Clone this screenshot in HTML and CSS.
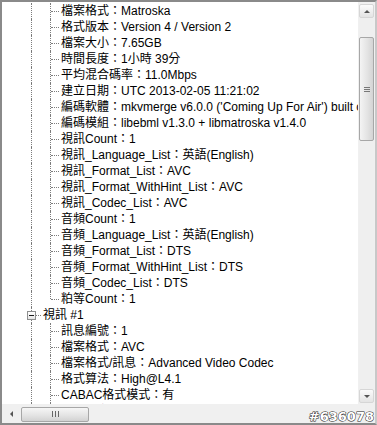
FILE: index.html
```html
<!DOCTYPE html>
<html>
<head>
<meta charset="utf-8">
<link rel="stylesheet" href="styles.css">
</head>
<body>
<div class="window">
  <div class="view">
    <div class="tree">
      <div class="row"><span class="cell v"></span><span class="cell t"></span><span class="txt">檔案格式：Matroska</span></div>
      <div class="row"><span class="cell v"></span><span class="cell t"></span><span class="txt">格式版本：Version 4 / Version 2</span></div>
      <div class="row"><span class="cell v"></span><span class="cell t"></span><span class="txt">檔案大小：7.65GB</span></div>
      <div class="row"><span class="cell v"></span><span class="cell t"></span><span class="txt">時間長度：1小時 39分</span></div>
      <div class="row"><span class="cell v"></span><span class="cell t"></span><span class="txt">平均混合碼率：11.0Mbps</span></div>
      <div class="row"><span class="cell v"></span><span class="cell t"></span><span class="txt">建立日期：UTC 2013-02-05 11:21:02</span></div>
      <div class="row"><span class="cell v"></span><span class="cell t"></span><span class="txt">編碼軟體：mkvmerge v6.0.0 ('Coming Up For Air') built on Jan 20 2013 12:56:18</span></div>
      <div class="row"><span class="cell v"></span><span class="cell t"></span><span class="txt">編碼模組：libebml v1.3.0 + libmatroska v1.4.0</span></div>
      <div class="row"><span class="cell v"></span><span class="cell t"></span><span class="txt">視訊Count：1</span></div>
      <div class="row"><span class="cell v"></span><span class="cell t"></span><span class="txt">視訊_Language_List：英語(English)</span></div>
      <div class="row"><span class="cell v"></span><span class="cell t"></span><span class="txt">視訊_Format_List：AVC</span></div>
      <div class="row"><span class="cell v"></span><span class="cell t"></span><span class="txt">視訊_Format_WithHint_List：AVC</span></div>
      <div class="row"><span class="cell v"></span><span class="cell t"></span><span class="txt">視訊_Codec_List：AVC</span></div>
      <div class="row"><span class="cell v"></span><span class="cell t"></span><span class="txt">音頻Count：1</span></div>
      <div class="row"><span class="cell v"></span><span class="cell t"></span><span class="txt">音頻_Language_List：英語(English)</span></div>
      <div class="row"><span class="cell v"></span><span class="cell t"></span><span class="txt">音頻_Format_List：DTS</span></div>
      <div class="row"><span class="cell v"></span><span class="cell t"></span><span class="txt">音頻_Format_WithHint_List：DTS</span></div>
      <div class="row"><span class="cell v"></span><span class="cell t"></span><span class="txt">音頻_Codec_List：DTS</span></div>
      <div class="row"><span class="cell v"></span><span class="cell l"></span><span class="txt">粕等Count：1</span></div>
      <div class="row"><span class="cell node"><span class="box"></span></span><span class="txt node-txt">視訊 #1</span></div>
      <div class="row"><span class="cell v"></span><span class="cell t"></span><span class="txt">訊息編號：1</span></div>
      <div class="row"><span class="cell v"></span><span class="cell t"></span><span class="txt">檔案格式：AVC</span></div>
      <div class="row"><span class="cell v"></span><span class="cell t"></span><span class="txt">檔案格式/訊息：Advanced Video Codec</span></div>
      <div class="row"><span class="cell v"></span><span class="cell t"></span><span class="txt">格式算法：High@L4.1</span></div>
      <div class="row"><span class="cell v"></span><span class="cell t"></span><span class="txt">CABAC格式模式：有</span></div>
      <div class="row"><span class="cell v"></span><span class="cell t"></span><span class="txt">格式設定，參考畫格：4 畫格</span></div>
    </div>
  </div>
  <div class="vscroll">
    <div class="btn up"><span class="arrow-up"></span></div>
    <div class="track">
      <div class="spacer-top"></div>
      <div class="vthumb"><span class="grip-h"></span><span class="grip-h"></span><span class="grip-h"></span></div>
    </div>
    <div class="btn down"><span class="arrow-down"></span></div>
  </div>
  <div class="hscroll">
    <div class="hbtn left"><span class="arrow-left"></span></div>
    <div class="hthumb"><span class="grip-v"></span><span class="grip-v"></span><span class="grip-v"></span></div>
  </div>
  <div class="corner"></div>
  <div class="watermark">#636078</div>
</div>
</body>
</html>
```

FILE: styles.css
```css
* { box-sizing: border-box; }
html, body { margin: 0; padding: 0; background: #fff; }
body { width: 377px; height: 425px; overflow: hidden; }

.window {
  position: relative;
  width: 377px;
  height: 425px;
  border-top: 2px solid #8a8a8a;
  border-left: 2px solid #8a8a8a;
  border-right: 2px solid #c8c8c8;
  border-bottom: 2px solid #8a8a8a;
  display: grid;
  grid-template-columns: 1fr 17px;
  grid-template-rows: 1fr 19px;
  background: #fff;
  font-family: "Liberation Sans", "Noto Sans CJK TC", sans-serif;
  font-size: 12px;
  color: #000;
}

.view { overflow: hidden; background: #fff; }
.tree { padding: 1px 0 0 20px; }
.row {
  display: flex;
  align-items: center;
  height: 16px;
  white-space: nowrap;
}
.txt { line-height: 16px; margin-left: 1px; }
.node-txt { margin-left: 2px; }

.cell {
  position: relative;
  flex: 0 0 19px;
  width: 19px;
  height: 16px;
}
.cell::before {
  content: "";
  position: absolute;
  left: 9px;
  top: 0;
  bottom: 0;
  border-left: 1px dotted #7c7c7c;
}
.cell.l::before { bottom: 8px; }
.cell.t::after, .cell.l::after, .cell.node::after {
  content: "";
  position: absolute;
  left: 10px;
  right: 1px;
  top: 8px;
  border-top: 1px dotted #7c7c7c;
}
.cell.node::after { left: 14px; right: 0; }
.box {
  position: absolute;
  left: 5px;
  top: 4px;
  width: 9px;
  height: 9px;
  border: 1px solid #8e8f8f;
  background: linear-gradient(#ffffff, #e6e6e6);
  z-index: 1;
}
.box::after {
  content: "";
  position: absolute;
  left: 1px;
  top: 3px;
  width: 5px;
  height: 1px;
  background: #1a1a1a;
}

/* vertical scrollbar */
.vscroll {
  display: flex;
  flex-direction: column;
  background: #f0f0f0;
  padding: 2px 1px 0 1px;
}
.btn {
  height: 14px;
  border: 1px solid #d6d6d6;
  border-radius: 2px;
  background: linear-gradient(#fbfbfb, #e4e4e4);
  display: flex;
  align-items: center;
  justify-content: center;
  flex: 0 0 auto;
}
.btn.down { margin-bottom: 1px; }
.arrow-up {
  width: 0; height: 0;
  border-left: 3px solid transparent;
  border-right: 3px solid transparent;
  border-bottom: 3px solid #555;
}
.arrow-down {
  width: 0; height: 0;
  border-left: 3px solid transparent;
  border-right: 3px solid transparent;
  border-top: 3px solid #555;
}
.track {
  flex: 1 1 auto;
  display: flex;
  flex-direction: column;
  background: #efefef;
}
.spacer-top { height: 19px; }
.vthumb {
  height: 104px;
  border: 1px solid #a7a7a7;
  border-radius: 2px;
  background: linear-gradient(90deg, #f4f4f4, #e2e2e2 60%, #d4d4d4);
  display: flex;
  flex-direction: column;
  align-items: center;
  justify-content: center;
  gap: 1px;
}
.grip-h { width: 6px; height: 1px; background: #777; }

/* horizontal scrollbar */
.hscroll {
  display: flex;
  align-items: center;
  background: #f0f0f0;
  padding: 1px 0 0 1px;
  gap: 2px;
}
.hbtn {
  width: 16px;
  height: 15px;
  display: flex;
  align-items: center;
  justify-content: center;
}
.arrow-left {
  width: 0; height: 0;
  border-top: 3px solid transparent;
  border-bottom: 3px solid transparent;
  border-right: 3px solid #555;
}
.hthumb {
  width: 68px;
  height: 15px;
  border: 1px solid #a7a7a7;
  border-radius: 2px;
  background: linear-gradient(#f6f6f6, #e4e4e4 55%, #d2d2d2);
  display: flex;
  align-items: center;
  justify-content: center;
  gap: 2px;
}
.grip-v { width: 1px; height: 6px; background: #666; }
.corner { background: #f0f0f0; }

.watermark {
  position: absolute;
  right: 1px;
  bottom: -1px;
  font-family: "DejaVu Sans", sans-serif;
  font-weight: bold;
  font-size: 13px;
  letter-spacing: 0;
  color: #fff;
  -webkit-text-stroke: 1px #222;
  paint-order: stroke fill;
  line-height: 15px;
}
```
